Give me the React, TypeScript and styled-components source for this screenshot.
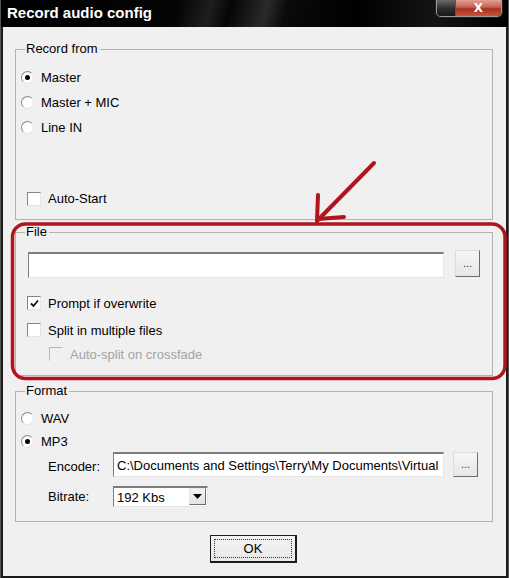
import React from 'react';
import styled, { createGlobalStyle } from 'styled-components';

const GlobalStyle = createGlobalStyle`
  html, body {
    margin: 0;
    padding: 0;
    background: #ffffff;
  }
  body {
    font-family: 'Liberation Sans', Arial, sans-serif;
    font-size: 13px;
    color: #000;
  }
`;

const RecordAudioConfig = () => {
  return (
    <Window>
      <TitleBar>
        <Title>Record audio config</Title>
        <FrameButtons>
          <BlankButton />
          <CloseButton>X</CloseButton>
        </FrameButtons>
      </TitleBar>

      <Client>
        <Group>
          <Legend>Record from</Legend>
          <GroupBody $top={9} $bottom={8}>
            <OptionRow $indent={5} $height={25}>
              <Radio $checked />
              Master
            </OptionRow>
            <OptionRow $indent={5} $height={25}>
              <Radio />
              Master + MIC
            </OptionRow>
            <OptionRow $indent={5} $height={25}>
              <Radio />
              Line IN
            </OptionRow>
            <OptionRow $indent={11} $top={46} $height={25}>
              <CheckBox />
              Auto-Start
            </OptionRow>
          </GroupBody>
        </Group>

        <Group $top={5}>
          <Legend>File</Legend>
          <GroupBody $top={11} $bottom={9}>
            <FieldRow $indent={12}>
              <TextBox $width={416} $height={26} $top={2} />
              <BrowseButton $gap={11}>...</BrowseButton>
            </FieldRow>
            <OptionRow $indent={11} $top={13}>
              <CheckBox $checked>
                <svg width="9" height="9" viewBox="0 0 9 9">
                  <path d="M1 4.5 L3.5 7 L8 1.5" fill="none" stroke="#111" strokeWidth="1.8" />
                </svg>
              </CheckBox>
              Prompt if overwrite
            </OptionRow>
            <OptionRow $indent={11} $top={3}>
              <CheckBox />
              Split in multiple files
            </OptionRow>
            <OptionRow $indent={33} $disabled>
              <CheckBox $disabled />
              Auto-split on crossfade
            </OptionRow>
          </GroupBody>
        </Group>

        <Group $top={8}>
          <Legend>Format</Legend>
          <GroupBody $top={8} $bottom={14}>
            <OptionRow $indent={5}>
              <Radio />
              WAV
            </OptionRow>
            <OptionRow $indent={5} $height={22}>
              <Radio $checked />
              MP3
            </OptionRow>
            <FieldRow $indent={32}>
              <FieldLabel $top={7}>Encoder:</FieldLabel>
              <TextBox $width={331} $height={25}>
                C:\Documents and Settings\Terry\My Documents\Virtual
              </TextBox>
              <BrowseButton $gap={9} $height={25}>...</BrowseButton>
            </FieldRow>
            <FieldRow $indent={32} $top={9} $center>
              <FieldLabel>Bitrate:</FieldLabel>
              <Select>
                <SelectValue>192 Kbs</SelectValue>
                <DropButton>
                  <svg width="9" height="5" viewBox="0 0 9 5">
                    <path d="M0 0 H9 L4.5 5 Z" fill="#000" />
                  </svg>
                </DropButton>
              </Select>
            </FieldRow>
          </GroupBody>
        </Group>

        <ButtonBar>
          <OkButton>
            <FocusRing>OK</FocusRing>
          </OkButton>
        </ButtonBar>
      </Client>

      <Annotation viewBox="0 0 509 578" width="509" height="578">
        <rect
          x="11.5"
          y="224"
          width="492.5"
          height="154.5"
          rx="13"
          fill="none"
          stroke="#b3141c"
          strokeWidth="3.5"
        />
        <g stroke="#b3141c" strokeWidth="4" strokeLinecap="round" fill="none">
          <path d="M373 163 L316 221" />
          <path d="M317 195 L316 220" />
          <path d="M317 219 L343 217" />
        </g>
      </Annotation>
    </Window>
  );
};

export default function App() {
  return (
    <>
      <GlobalStyle />
      <RecordAudioConfig />
    </>
  );
}

const Window = styled.div`
  position: relative;
  width: 509px;
  height: 578px;
  box-sizing: border-box;
  display: flex;
  flex-direction: column;
  background: #1b1b1b;
  border-left: 1px solid #555;
  border-right: 1px solid #555;
  overflow: hidden;
`;

const TitleBar = styled.div`
  height: 27px;
  flex-shrink: 0;
  display: flex;
  justify-content: space-between;
  align-items: flex-start;
  padding: 0 6px 0 6px;
  background: linear-gradient(
    105deg,
    #000 0%,
    #050505 35%,
    #1e1e1e 41%,
    #060606 45%,
    #2a2a2a 52%,
    #0a0a0a 56%,
    #000 70%,
    #141414 85%,
    #000 100%
  );
`;

const Title = styled.div`
  padding-top: 4px;
  color: #fff;
  font-weight: bold;
  font-size: 15px;
  line-height: 17px;
`;

const FrameButtons = styled.div`
  display: flex;
  height: 17px;
  box-sizing: border-box;
  border: 1px solid #9a9a9a;
  border-top: none;
  border-radius: 0 0 5px 5px;
  overflow: hidden;
  box-shadow: 0 0 0 1px #222;
`;

const BlankButton = styled.div`
  width: 18px;
  background: linear-gradient(#6a6a6a, #2c2c2c 55%, #1a1a1a);
  border-right: 1px solid #555;
`;

const CloseButton = styled.div`
  width: 45px;
  display: flex;
  align-items: center;
  justify-content: center;
  color: #fff;
  font-weight: bold;
  font-size: 12px;
  line-height: 12px;
  font-family: 'DejaVu Sans', sans-serif;
  background: linear-gradient(#e6a197 0%, #c7604f 45%, #a8311f 55%, #c9553c 100%);
`;

const Client = styled.div`
  flex: 1;
  margin: 0 2px 2px 2px;
  padding: 15px 13px 0 12px;
  background: #f0f0f0;
  display: flex;
  flex-direction: column;
`;

const Group = styled.fieldset<{ $top?: number }>`
  margin: ${(p) => p.$top ?? 0}px 0 0 0;
  padding: 0;
  min-width: 0;
  border: 1px solid #b2b2b2;
  display: flex;
  flex-direction: column;
`;

const Legend = styled.legend`
  margin-left: 9px;
  padding: 0 2px 0 1px;
  font-size: 13px;
  line-height: 14px;
`;

const GroupBody = styled.div<{ $top: number; $bottom: number }>`
  display: flex;
  flex-direction: column;
  padding: ${(p) => p.$top}px 0 ${(p) => p.$bottom}px 0;
`;

const OptionRow = styled.label<{
  $indent: number;
  $top?: number;
  $height?: number;
  $disabled?: boolean;
}>`
  display: flex;
  align-items: center;
  gap: 7px;
  height: ${(p) => p.$height ?? 24}px;
  margin-top: ${(p) => p.$top ?? 0}px;
  padding-left: ${(p) => p.$indent}px;
  color: ${(p) => (p.$disabled ? '#a3a3a3' : '#000')};
  line-height: 15px;
`;

const Radio = styled.span<{ $checked?: boolean }>`
  width: 13px;
  height: 13px;
  box-sizing: border-box;
  border-radius: 50%;
  border: 1px solid;
  border-color: #8a8a8a #e2e2e2 #e2e2e2 #8a8a8a;
  background: radial-gradient(circle at 60% 60%, #fff 55%, #e8e8e8 100%);
  display: flex;
  align-items: center;
  justify-content: center;

  &::after {
    content: '';
    width: 5px;
    height: 5px;
    border-radius: 50%;
    background: #000;
    display: ${(p) => (p.$checked ? 'block' : 'none')};
  }
`;

const CheckBox = styled.span<{ $checked?: boolean; $disabled?: boolean }>`
  width: 14px;
  height: 14px;
  box-sizing: border-box;
  border: 1px solid;
  border-color: ${(p) =>
    p.$disabled ? '#b8b8b8 #f4f4f4 #f4f4f4 #b8b8b8' : '#858585 #e4e4e4 #e4e4e4 #858585'};
  background: ${(p) => (p.$disabled ? '#f0f0f0' : '#fff')};
  display: flex;
  align-items: center;
  justify-content: center;
`;

const FieldRow = styled.div<{ $indent: number; $top?: number; $center?: boolean }>`
  display: flex;
  align-items: ${(p) => (p.$center ? 'center' : 'flex-start')};
  margin-top: ${(p) => p.$top ?? 0}px;
  padding-left: ${(p) => p.$indent}px;
`;

const FieldLabel = styled.span<{ $top?: number }>`
  width: 65px;
  flex-shrink: 0;
  margin-top: ${(p) => p.$top ?? 0}px;
  line-height: 15px;
`;

const TextBox = styled.div<{ $width: number; $height: number; $top?: number }>`
  width: ${(p) => p.$width}px;
  height: ${(p) => p.$height}px;
  margin-top: ${(p) => p.$top ?? 0}px;
  box-sizing: border-box;
  padding: 0 3px;
  border: 1px solid;
  border-color: #7c7c7c #e6e6e6 #e6e6e6 #7c7c7c;
  border-top-width: 2px;
  background: #fff;
  display: flex;
  align-items: center;
  white-space: nowrap;
  overflow: hidden;
  font-size: 13px;
`;

const BrowseButton = styled.div<{ $gap: number; $height?: number }>`
  width: 25px;
  height: ${(p) => p.$height ?? 27}px;
  margin-left: ${(p) => p.$gap}px;
  box-sizing: border-box;
  border: 1px solid;
  border-color: #dcdcdc #6c6c6c #6c6c6c #dcdcdc;
  background: linear-gradient(#f6f6f6, #e6e6e6);
  display: flex;
  align-items: center;
  justify-content: center;
  padding-bottom: 2px;
  font-size: 11px;
  color: #333;
`;

const Select = styled.div`
  width: 95px;
  height: 21px;
  box-sizing: border-box;
  border: 1px solid;
  border-color: #7c7c7c #e6e6e6 #e6e6e6 #7c7c7c;
  border-top-width: 2px;
  background: #fff;
  display: flex;
  align-items: stretch;
`;

const SelectValue = styled.span`
  flex: 1;
  padding-left: 3px;
  display: flex;
  align-items: center;
`;

const DropButton = styled.span`
  width: 17px;
  margin: 0 1px 1px 0;
  box-sizing: border-box;
  border: 1px solid;
  border-color: #e8e8e8 #6c6c6c #6c6c6c #e8e8e8;
  background: linear-gradient(#f3f3f3, #e2e2e2);
  display: flex;
  align-items: center;
  justify-content: center;
`;

const ButtonBar = styled.div`
  display: flex;
  justify-content: center;
  margin-top: 13px;
  padding-right: 1px;
`;

const OkButton = styled.div`
  width: 87px;
  height: 28px;
  box-sizing: border-box;
  border: 1px solid #1c1c1c;
  border-right-width: 2px;
  border-bottom-width: 2px;
  background: linear-gradient(#f4f4f4, #e8e8e8);
  padding: 3px;
  display: flex;
`;

const FocusRing = styled.div`
  flex: 1;
  border: 1px dotted #333;
  display: flex;
  align-items: center;
  justify-content: center;
  font-size: 13px;
`;

const Annotation = styled.svg`
  position: absolute;
  left: 0;
  top: 0;
  pointer-events: none;
`;
